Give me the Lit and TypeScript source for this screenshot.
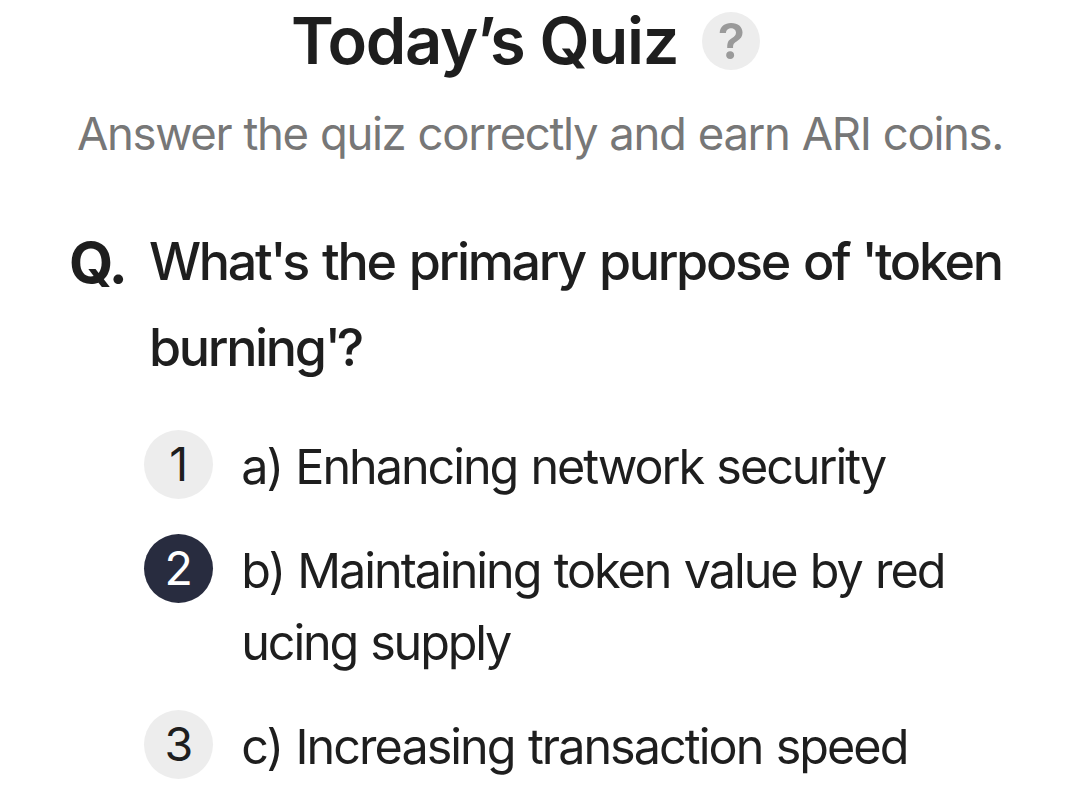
import { LitElement, css, html } from 'lit'
import { customElement, property } from 'lit/decorators.js'
import { classMap } from 'lit/directives/class-map.js'

interface Option {
  kind: string;
  lines: string[];
}

@customElement('quiz-option')
export class QuizOption extends LitElement {
  @property({ type: Number }) number = 1;
  @property({ type: Boolean }) selected = false;
  @property({ attribute: false }) option: Option = { kind: '', lines: [] };

  render() {
    return html`
      <div class="option">
        <span class=${classMap({ badge: true, selected: this.selected })}>${this.number}</span>
        <div class="label">
          ${this.option.lines.map((line, i) => html`<div class="${this.option.kind}${i}">${line}</div>`)}
        </div>
      </div>
    `;
  }

  static get styles() {
    return css`
    :host {
      display: block;
    }
    .option {
      align-items: flex-start;
      display: flex;
      gap: 28px;
    }
    .badge {
      align-items: center;
      background-color: #ededed;
      border-radius: 50%;
      color: #1e1e1e;
      display: flex;
      font-size: 46.5px;
      height: 69px;
      justify-content: center;
      width: 69px;
    }
    .badge.selected {
      background-color: #282c3f;
      color: #fff;
    }
    .label {
      color: #1e1e1e;
      font-size: 48.5px;
      line-height: 72px;
      padding-bottom: 1px;
      padding-top: 1px;
      white-space: nowrap;
      word-spacing: 1.6px;
    }
    .a0 { letter-spacing: -2.04px; }
    .b0 { letter-spacing: -2.02px; }
    .b1 { letter-spacing: -2.15px; }
    .c0 { letter-spacing: -1.95px; }
    `;
  }
}

@customElement('app-root')
export class AppRoot extends LitElement {
  @property({ type: Number }) answer = 2;

  options: Option[] = [
    { kind: 'a', lines: ['a) Enhancing network security'] },
    { kind: 'b', lines: ['b) Maintaining token value by red', 'ucing supply'] },
    { kind: 'c', lines: ['c) Increasing transaction speed'] },
  ];

  render() {
    return html`
      <main class="quiz">
        <header class="header">
          <h1 class="title">Today’s Quiz</h1>
          <span class="help">?</span>
        </header>
        <p class="subtitle">Answer the quiz correctly and earn ARI coins.</p>
        <section class="question">
          <strong class="mark">Q.</strong>
          <h2 class="text">What<span class="tick">'</span>s the primary purpose of <span class="tick open">'</span>token<br>burning<span class="tick">'</span>?</h2>
        </section>
        <div class="options">
          ${this.options.map((option, i) => html`
            <quiz-option .number=${i + 1} .option=${option} ?selected=${this.answer === i + 1}></quiz-option>
          `)}
        </div>
      </main>
    `;
  }

  static get styles() {
    return css`
    :host {
      display: block;
      font-family: Inter, "Liberation Sans", sans-serif;
    }
    .quiz {
      background-color: #fff;
      box-sizing: border-box;
      height: 808px;
      overflow: hidden;
    }
    .header {
      align-items: center;
      display: flex;
      gap: 24px;
      height: 82px;
      padding-left: 291px;
    }
    .title {
      color: #1e1e1e;
      font-size: 65px;
      font-weight: 600;
      letter-spacing: -1.3px;
      line-height: 82px;
      margin: 0;
      white-space: nowrap;
    }
    .help {
      align-items: center;
      background-color: #ededed;
      border-radius: 50%;
      color: #9a9a9a;
      display: flex;
      font-size: 50px;
      font-weight: 600;
      height: 58px;
      justify-content: center;
      line-height: 58px;
      width: 58px;
    }
    .subtitle {
      color: #777;
      font-size: 45.5px;
      letter-spacing: -1.36px;
      line-height: 60px;
      margin: 22px 0 0 77px;
      white-space: nowrap;
      word-spacing: 0.8px;
    }
    .question {
      align-items: flex-start;
      color: #1e1e1e;
      display: flex;
      line-height: 86px;
      padding: 55px 0 0 69px;
    }
    .mark {
      font-size: 57px;
      font-weight: 700;
      height: 85px;
      letter-spacing: -2px;
      margin-top: 1px;
      width: 80px;
    }
    .text {
      font-size: 52px;
      font-weight: 500;
      letter-spacing: -2.35px;
      margin: 0;
      white-space: nowrap;
      word-spacing: 2.6px;
    }
    .tick {
      letter-spacing: -4.2px;
    }
    .tick.open {
      letter-spacing: -2.8px;
      margin-left: -2px;
    }
    .options {
      display: grid;
      gap: 30px;
      padding: 38.5px 0 0 144.3px;
    }
    `;
  }
}

declare global {
  interface HTMLElementTagNameMap {
    'app-root': AppRoot;
    'quiz-option': QuizOption;
  }
}
